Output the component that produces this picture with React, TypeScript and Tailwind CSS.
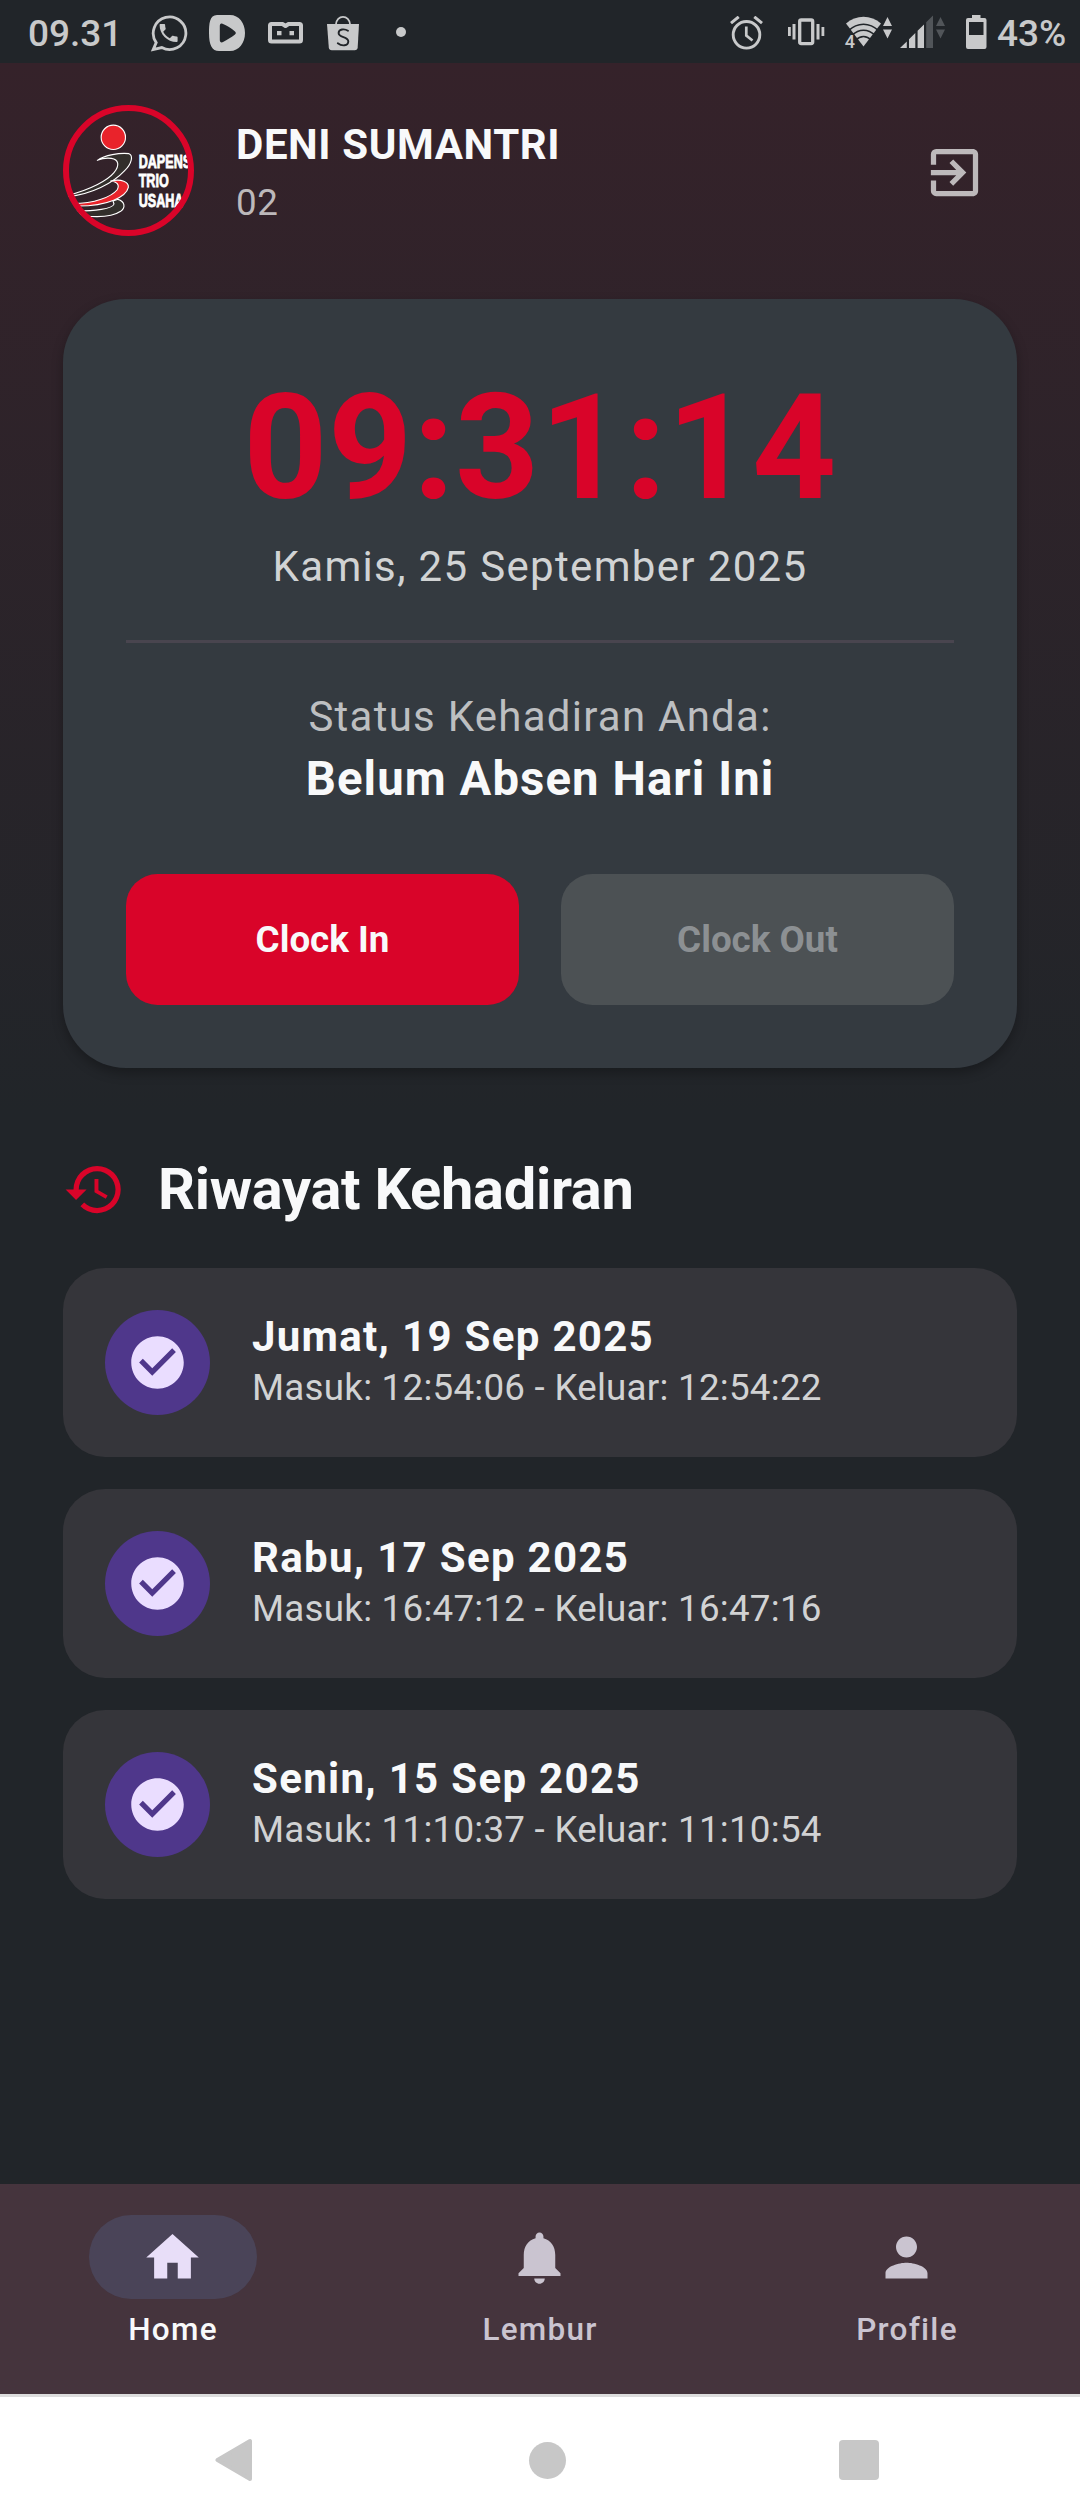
import React from "react";

const rows = [
  { day: "Jumat, 19 Sep 2025", times: "Masuk: 12:54:06 - Keluar: 12:54:22" },
  { day: "Rabu, 17 Sep 2025", times: "Masuk: 16:47:12 - Keluar: 16:47:16" },
  { day: "Senin, 15 Sep 2025", times: "Masuk: 11:10:37 - Keluar: 11:10:54" },
];

const HOME = "M10 20v-6h4v6h5v-8h3L12 3 2 12h3v8z";
const BELL =
  "M12 22c1.1 0 2-.9 2-2h-4c0 1.1.89 2 2 2zm6-6v-5c0-3.07-1.64-5.64-4.5-6.32V4c0-.83-.67-1.5-1.5-1.5s-1.5.67-1.5 1.5v.68C7.63 5.36 6 7.92 6 11v5l-2 2v1h16v-1l-2-2z";
const PERSON =
  "M12 12c2.21 0 4-1.79 4-4s-1.79-4-4-4-4 1.79-4 4 1.79 4 4 4zm0 2c-2.67 0-8 1.34-8 4v2h16v-2c0-2.66-5.33-4-8-4z";
const HISTORY =
  "M13 3a9 9 0 0 0-9 9H1l3.89 3.89.07.14L9 12H6c0-3.87 3.13-7 7-7s7 3.13 7 7-3.13 7-7 7c-1.93 0-3.68-.79-4.94-2.06l-1.42 1.42A8.954 8.954 0 0 0 13 21a9 9 0 0 0 0-18zm-1 5v5l4.28 2.54.72-1.21-3.5-2.08V8H12z";
const EXIT =
  "M10.09 15.59 11.5 17l5-5-5-5-1.41 1.41L12.67 11H3v2h9.67l-2.58 2.59zM19 3H5a2 2 0 0 0-2 2v4h2V5h14v14H5v-4H3v4a2 2 0 0 0 2 2h14c1.1 0 2-.9 2-2V5c0-1.1-.9-2-2-2z";
const CHECK =
  "M12 2C6.48 2 2 6.48 2 12s4.48 10 10 10 10-4.48 10-10S17.52 2 12 2zm-2 15l-5-5 1.41-1.41L10 14.17l7.59-7.59L19 8l-9 9z";

function Icon({ d, className = "" }: { d: string; className?: string }) {
  return (
    <svg viewBox="0 0 24 24" className={"h-[63px] w-[63px] shrink-0 fill-current " + className}>
      <path d={d} />
    </svg>
  );
}

function StatusBar() {
  return (
    <div className="flex h-[63px] shrink-0 items-start bg-[#212529] text-[#c8c9ca]">
      <div className="ml-[28px] mt-[12px] w-[122px] whitespace-nowrap text-[37px] font-medium leading-[44px]">09.31</div>
      {/* WhatsApp */}
      <svg className="mt-[14px] h-[38px] w-[38px] shrink-0" viewBox="0 0 38 38">
        <path d="M5.4 28.6A16.3 16.3 0 1 1 11 33.6L2.4 35.6Z" transform="translate(.8 0)" fill="none" stroke="currentColor" strokeWidth="2.8" />
        <path
          transform="translate(6.6 6.9)"
          fill="currentColor"
          d="M6.62 10.79c1.44 2.83 3.76 5.14 6.59 6.59l2.2-2.2c.27-.27.67-.36 1.02-.24 1.12.37 2.33.57 3.57.57.55 0 1 .45 1 1V20c0 .55-.45 1-1 1-9.39 0-17-7.61-17-17 0-.55.45-1 1-1h3.5c.55 0 1 .45 1 1 0 1.25.2 2.45.57 3.57.11.35.03.74-.25 1.02l-2.2 2.2z"
        />
      </svg>
      {/* video player */}
      <svg className="ml-[21px] mt-[15px] h-9 w-9 shrink-0" viewBox="0 0 36 36">
        <path
          fill="currentColor"
          fillRule="evenodd"
          d="M8 0H21C30 0 36 8 36 18S30 36 21 36H10C3 36 0 30 0 18 0 9 .5 0 8 0ZM13.500 8.700C11.500 7.800 10.800 9.500 10.800 11V25C10.800 27.500 12.500 28 14.500 26.800 18 25 22 22.500 26 19.500 27.200 18.500 27 17.500 26 16.500 22 13 18 10.500 13.500 8.700Z"
        />
      </svg>
      {/* robot face */}
      <svg className="ml-[23px] mt-[22px] h-[22px] w-[35px] shrink-0" viewBox="0 0 35 22">
        <path
          fill="none"
          stroke="currentColor"
          strokeWidth="4"
          strokeLinejoin="round"
          d="M14.500 2H3.500Q2 2 2 3.500V18Q2 19.500 3.500 19.500H31.500Q33 19.500 33 18V3.500Q33 2 31.500 2H20.500L17.500 4Z"
        />
        <path fill="currentColor" d="M9 9h4.500v4.300H9zM21.500 9H26v4.300h-4.500z" />
      </svg>
      {/* shopping bag */}
      <svg className="ml-[24px] mt-[16px] h-[35px] w-[33px] shrink-0" viewBox="0 0 33 35">
        <path fill="currentColor" d="M0 8h32l-1.300 23.500q-.3 2.700-3 2.700H4.800q-2.700 0-3-2.700z" />
        <path fill="none" stroke="currentColor" strokeWidth="1.800" d="M8.800 9C9.500-1.800 22.500-1.800 23.200 9" />
        <path
          fill="none"
          stroke="#212529"
          strokeWidth="1.900"
          strokeLinecap="round"
          d="M21 14.800C17.500 12.500 11.800 13 11.600 17 11.500 21.800 21.500 20.500 21.300 25.500 21.200 30 15 30.500 10.800 27.300"
        />
      </svg>
      <div className="ml-[36px] mt-[27px] h-[10px] w-[10px] shrink-0 rounded-full bg-[#c8c9ca]" />

      <div className="flex-1" />
      {/* alarm */}
      <svg className="mt-[16px] h-[34px] w-[33px] shrink-0" viewBox="0 0 33 34" fill="none" stroke="currentColor">
        <circle cx="16.500" cy="18.800" r="13.300" strokeWidth="2.900" />
        <path strokeWidth="3" d="M1 7.200 8.700 .8M32 7.200 24.300 .8" />
        <path strokeWidth="2.700" d="M16.300 10.500V19.500L22.500 24.500" />
      </svg>
      {/* vibrate */}
      <svg className="ml-[25px] mt-[18px] h-[28px] w-[37px] shrink-0" viewBox="0 0 37 28">
        <rect x="11.700" y="2" width="13" height="23.600" rx="1.500" fill="none" stroke="currentColor" strokeWidth="3.300" />
        <path fill="currentColor" d="M0 9h2.800v9H0zM4.500 6h3v15.500h-3zM28.500 6h3v15.500h-3zM33.500 9h2.800v9h-2.800z" />
      </svg>
      {/* wifi with traffic arrows */}
      <svg className="ml-[20px] mt-[16px] h-[34px] w-[48px] shrink-0 overflow-visible" viewBox="0 0 48 34">
        <path fill="currentColor" d="M18.500 30.500 1 7.500C11-1.500 26-1.500 36 7.500Z" />
        <g fill="none" stroke="#212529" strokeWidth="1.600">
          <path d="M3.500 14.700C12.500 6 24.500 6 33.500 14.700" />
          <path d="M7 19.200C14 12.500 23 12.500 30 19.200" />
          <path d="M10.500 24.200C15.500 19.300 21.500 19.300 26.500 24.200" />
        </g>
        <path fill="#212529" d="M0 18H9L12.500 34H0Z" />
        <text x="-.3" y="32" fontSize="18" fontWeight="500" fill="currentColor" className="font-['Roboto',sans-serif]">4</text>
        <path fill="currentColor" d="M38 10 42.500 1 47 10ZM38 13.500H47L42.500 22.500Z" />
      </svg>
      {/* cell signal */}
      <svg className="ml-[7px] mt-[15px] h-[34px] w-[46px] shrink-0" viewBox="0 0 46 34">
        <path fill="currentColor" d="M0 33 6.800 26.500V33ZM9 24.300 15.300 18V33H9ZM17.600 15.800 24 9.500V33H17.600Z" />
        <path fill="#515559" d="M26.200 7.300 33 .5V33H26.200ZM36 11 40.500 2 45 11ZM36 14.500H45L40.500 23.500Z" />
      </svg>
      {/* battery */}
      <svg className="ml-[20px] mt-[15px] h-[34px] w-[21px] shrink-0" viewBox="0 0 21 34">
        <path
          fill="currentColor"
          fillRule="evenodd"
          d="M6 0H14.500V3H18.500Q20.500 3 20.500 5V32Q20.500 34 18.500 34H2Q0 34 0 32V5Q0 3 2 3H6ZM3 7V20H17.500V7Z"
        />
      </svg>
      <div className="ml-[10px] mr-[2px] mt-[12px] w-[81px] whitespace-nowrap text-[37px] font-medium leading-[44px]">43%</div>
    </div>
  );
}

function Avatar() {
  return (
    <svg viewBox="15 15 393 393" className="h-[131px] w-[131px] shrink-0">
      <defs>
        <clipPath id="avatar">
          <circle cx="211.500" cy="211.500" r="196" />
        </clipPath>
      </defs>
      <g clipPath="url(#avatar)">
        <g stroke="#fff" strokeWidth="3.400" strokeLinejoin="round">
          <circle cx="166" cy="112" r="36.500" fill="#e9232b" />
          <path
            fill="#322e2b"
            d="M180 298C200 304 204 322 188 334 165 350 120 352 80 348L45 333C110 334 165 326 168 312L165 303Z"
          />
          <path
            fill="#322e2b"
            d="M118 181C140 165 185 158 213 161 226 166 222 190 200 212 165 250 100 283 30 290L30 286C100 268 150 240 168 218 186 196 182 178 160 175 145 173 130 176 118 181Z"
          />
          <path
            fill="#e9232b"
            d="M158 243C190 236 213 245 211 262 205 290 150 318 60 318L45 311C110 311 160 290 177 270 186 255 178 245 158 243Z"
          />
        </g>
        <g fill="#fff" stroke="#fff" strokeWidth="2.500" fontWeight="700" fontSize="54" className="font-['Liberation_Sans',sans-serif]">
          <text transform="translate(242 203) scale(.7 1)">DAPENS</text>
          <text transform="translate(242 261) scale(.7 1)">TRIO</text>
          <text transform="translate(242 320) scale(.7 1)">USAHA</text>
        </g>
      </g>
      <circle cx="211.500" cy="211.500" r="187.500" fill="none" stroke="#d90429" strokeWidth="18" />
    </svg>
  );
}

function NavItem({ d, label, active = false }: { d: string; label: string; active?: boolean }) {
  return (
    <div className="flex flex-1 flex-col items-center">
      <div
        className={
          "flex h-[84px] w-[168px] items-center justify-center rounded-full pr-px " +
          (active ? "bg-[#4a4458] text-[#e8def8]" : "text-[#cac4d0]")
        }
      >
        <Icon d={d} />
      </div>
      <div
        className={
          "mt-[10px] text-[31.5px] font-medium leading-[42px] tracking-[1.25px] " +
          (active ? "text-[#f8f9fa]" : "text-[#cac4d0]")
        }
      >
        {label}
      </div>
    </div>
  );
}

export default function App() {
  return (
    <div className="flex h-[2520px] w-[1080px] flex-col overflow-hidden bg-[#212529] font-['Roboto',sans-serif]">
      <StatusBar />
      <main className="flex-1 bg-[linear-gradient(to_bottom,#35222a_0px,#212529_1050px)] px-[63px] pt-[42px]">
        <header className="flex items-center">
          <Avatar />
          <div className="ml-[42px] flex-1 pt-px">
            <div className="text-[42px] font-bold leading-[63px] tracking-[0.6px] text-[#f8f9fa]">DENI SUMANTRI</div>
            <div className="text-[36.75px] leading-[53px] tracking-[0.66px] text-[#bdb9bb]">02</div>
          </div>
          <button className="flex h-[126px] w-[126px] items-center justify-center pt-[3px] text-[#bdb9bb]">
            <Icon d={EXIT} />
          </button>
        </header>

        <section className="mt-[63px] flex h-[769px] flex-col rounded-[63px] bg-[#343a40] p-[63px] text-center shadow-[0_5px_12px_rgba(0,0,0,0.28)]">
          <div className="text-[147px] font-bold leading-[172px] tracking-[0.6px] text-[#d90429]">09:31:14</div>
          <div className="mt-px text-[42px] leading-[63px] tracking-[1.34px] text-[#d1d3d4]">Kamis, 25 September 2025</div>
          <div className="mt-[42px] h-[3px] bg-[#49454f]" />
          <div className="mt-[42px] text-[42px] leading-[63px] tracking-[1.25px] text-[#bdbfc1]">Status Kehadiran Anda:</div>
          <div className="text-[47.25px] font-bold leading-[63px] tracking-[1.1px] text-[#f8f9fa]">Belum Absen Hari Ini</div>
          <div className="mt-[63px] flex gap-[42px]">
            <button className="h-[131px] flex-1 rounded-[31.5px] bg-[#d90429] text-[36.75px] font-bold text-[#f8f9fa]">
              Clock In
            </button>
            <button className="h-[131px] flex-1 rounded-[31.5px] bg-[#4c5154] text-[36.75px] font-bold text-[#8c9093]">
              Clock Out
            </button>
          </div>
        </section>

        <div className="mt-[84px] flex h-[74px] items-center gap-[32px]">
          <Icon d={HISTORY} className="text-[#d90429]" />
          <h2 className="text-[57.75px] font-bold leading-[74px] tracking-[-0.28px] text-[#f8f9fa]">Riwayat Kehadiran</h2>
        </div>

        <div className="mt-[42px] flex flex-col gap-[32px]">
          {rows.map((r) => (
            <div key={r.day} className="flex h-[189px] items-center rounded-[42px] bg-[#35353a] px-[42px]">
              <div className="flex h-[105px] w-[105px] items-center justify-center rounded-full bg-[#4f378b] text-[#eaddff]">
                <Icon d={CHECK} />
              </div>
              <div className="ml-[42px]">
                <div className="text-[42px] font-bold leading-[50px] tracking-[1.31px] text-[#f8f9fa]">{r.day}</div>
                <div className="text-[36.75px] leading-[52px] tracking-[0.24px] text-[#d1d2d3]">{r.times}</div>
              </div>
            </div>
          ))}
        </div>
      </main>

      <nav className="flex h-[210px] shrink-0 gap-[21px] bg-[#45343d] pt-[31px]">
        <NavItem d={HOME} label="Home" active />
        <NavItem d={BELL} label="Lembur" />
        <NavItem d={PERSON} label="Profile" />
      </nav>

      <div className="flex h-[126px] shrink-0 items-center border-t-[3px] border-[#dcdcdc] bg-white pt-[3px] text-[#c7c7c7]">
        <svg className="ml-[215px] h-[46px] w-[38px]" viewBox="0 0 38 46">
          <path fill="currentColor" stroke="currentColor" strokeWidth="4" strokeLinejoin="round" d="M35 4V42L2.500 23Z" />
        </svg>
        <div className="ml-[276px] h-[37px] w-[37px] rounded-full bg-[#c7c7c7]" />
        <div className="ml-[273px] h-[40px] w-[40px] rounded-[4px] bg-[#c7c7c7]" />
      </div>
    </div>
  );
}
